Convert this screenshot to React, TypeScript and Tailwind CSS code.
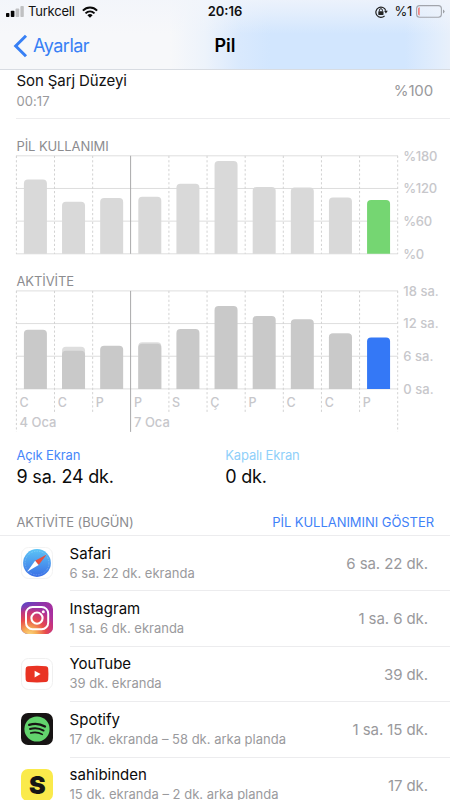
import React from "react";

const STEP = 38.13;
const LEFT = 0.4;

type Bar = { top: number; inner?: number };

function Chart({
  bars,
  top,
  height,
  accent,
  fill,
  labels,
  days,
}: {
  bars: Bar[];
  top: number;
  height: number;
  accent: string;
  fill: string;
  labels: string[];
  days?: string[];
}) {
  const base = top + 98;
  const bar = (x: number, y: number) =>
    `M${x} ${base}V${y + 4}Q${x} ${y} ${x + 4} ${y}H${x + 19}Q${x + 23} ${y} ${x + 23} ${y + 4}V${base}Z`;
  return (
    <svg
      width="434"
      height={height}
      viewBox={`0 0 434 ${height}`}
      className="block overflow-visible font-[Inter,sans-serif]"
    >
      {labels.map((l, i) => (
        <g key={l}>
          <line x1="0" x2="382" y1={top + i * 32.67} y2={top + i * 32.67} stroke="#dedede" strokeWidth="1" />
          <text x="387.2" y={top + i * 32.67 + 4.9} fontSize="13" fontWeight="500" fill="#c7c7cb" letterSpacing={days ? "0.05" : "-0.25"}>
            {l}
          </text>
        </g>
      ))}
      {Array.from({ length: 11 }, (_, i) => {
        const x = LEFT + i * STEP;
        const end = days ? (i % 10 === 0 ? top + 141 : top + 123) : base;
        return i === 3 ? null : (
          <line key={i} x1={x} x2={x} y1={top} y2={end} stroke="#d2d2d2" strokeWidth="1" strokeDasharray="2.2 2.2" />
        );
      })}
      {bars.map((b, i) => {
        const x = LEFT + 7.5 + i * STEP;
        const last = i === bars.length - 1;
        return (
          <g key={i}>
            {b.inner !== undefined && <path d={bar(x, b.top)} fill="#dedede" />}
            <path d={bar(x, b.inner ?? b.top)} fill={last ? accent : fill} />
          </g>
        );
      })}
      <line x1="114.6" x2="114.6" y1={top} y2={days ? top + 141 : base} stroke="#a9a9ab" strokeWidth="1" />
      {days?.map((d, i) => (
        <text key={i} x={LEFT + i * STEP + 3.2} y={top + 116.3} fontSize="12.5" fontWeight="500" fill="#c7c7cb">
          {d}
        </text>
      ))}
      {days && (
        <>
          <text x="3.5" y={top + 136.3} fontSize="13" fontWeight="500" fill="#c7c7cb">4 Oca</text>
          <text x="118" y={top + 136.3} fontSize="13" fontWeight="500" fill="#c7c7cb">7 Oca</text>
        </>
      )}
    </svg>
  );
}

const usage: Bar[] = [179.5, 201.7, 198, 196.8, 183.7, 161, 187, 187.5, 197.5, 200].map((v) => ({ top: v - 155 }));
const activity: Bar[] = [
  { top: 39.8 },
  { top: 56.8, inner: 60.8 },
  { top: 55.8 },
  { top: 52.3, inner: 53.8 },
  { top: 39 },
  { top: 16 },
  { top: 26 },
  { top: 29.2 },
  { top: 43.2, inner: 43.6 },
  { top: 47.6 },
];

function SafariIcon() {
  return (
    <svg width="32" height="32" viewBox="0 0 32 32">
      <defs>
        <linearGradient id="safari" x1="0" y1="0" x2="0" y2="1">
          <stop offset="0" stopColor="#5bc4f6" />
          <stop offset="1" stopColor="#3b6fe6" />
        </linearGradient>
      </defs>
      <rect x=".5" y=".5" width="31" height="31" rx="7" fill="#fff" stroke="#f3f3f3" />
      <circle cx="16" cy="16" r="13.9" fill="url(#safari)" />
      <circle cx="16" cy="16" r="11.9" fill="none" stroke="#fff" strokeOpacity=".35" strokeWidth="1" strokeDasharray=".6 1.1" />
      <path d="M25.7 7.5L14.1 13.8L17.6 18Z" fill="#e8503f" />
      <path d="M14.1 13.8L17.6 18L6.2 24.7Z" fill="#fff" />
    </svg>
  );
}

function InstagramIcon() {
  return (
    <svg width="32" height="32" viewBox="0 0 32 32">
      <defs>
        <linearGradient id="igBase" x1="0" y1="0" x2="1" y2=".3">
          <stop offset="0" stopColor="#5449c6" />
          <stop offset=".55" stopColor="#8b35ad" />
          <stop offset="1" stopColor="#a92f9d" />
        </linearGradient>
        <radialGradient id="igWarm" cx=".27" cy="1.05" r="1.02">
          <stop offset="0" stopColor="#fbdc85" />
          <stop offset=".22" stopColor="#f6ad55" />
          <stop offset=".5" stopColor="#e84b4c" />
          <stop offset=".75" stopColor="#cc3478" stopOpacity=".85" />
          <stop offset="1" stopColor="#9b36b7" stopOpacity="0" />
        </radialGradient>
      </defs>
      <rect width="32" height="32" rx="7" fill="url(#igBase)" />
      <rect width="32" height="32" rx="7" fill="url(#igWarm)" />
      <rect x="5" y="5" width="22.2" height="22.2" rx="6.5" fill="none" stroke="#fff" strokeWidth="2" />
      <circle cx="16" cy="16.1" r="5.6" fill="none" stroke="#fff" strokeWidth="2.1" />
      <circle cx="22.3" cy="9.8" r="1.5" fill="#fff" />
    </svg>
  );
}

function YouTubeIcon() {
  return (
    <svg width="32" height="32" viewBox="0 0 32 32">
      <rect x=".5" y=".5" width="31" height="31" rx="7" fill="#fff" stroke="#f0f0f0" />
      <path d="M4.7 10.5Q4.9 8.5 6.8 8.2Q16 7.5 25.2 8.2Q27.1 8.5 27.2 10.5Q27.7 16 27.2 21.8Q27.1 23.8 25.2 24.1Q16 24.7 6.8 24.1Q4.9 23.8 4.7 21.8Q4.2 16 4.7 10.5Z" fill="#e93323" />
      <path d="M13.6 12.7V19.4L19.6 16Z" fill="#fff" />
    </svg>
  );
}

function SpotifyIcon() {
  return (
    <svg width="32" height="32" viewBox="0 0 32 32">
      <rect width="32" height="32" rx="7" fill="#171414" />
      <circle cx="16" cy="16" r="12.6" fill="#62d36d" />
      <g fill="none" stroke="#171414" strokeLinecap="round">
        <path d="M8.2 11.8C13.4 10.2 19.4 10.8 24 13.5" strokeWidth="2.3" />
        <path d="M9 16C13.4 14.7 18.7 15.3 22.6 17.6" strokeWidth="1.9" />
        <path d="M9.7 20C13.5 19 17.8 19.4 21.3 21.4" strokeWidth="1.6" />
      </g>
    </svg>
  );
}

function SahibindenIcon() {
  return (
    <div className="flex h-8 w-8 items-center justify-center rounded-[7px] bg-[#faea4b] text-[25px] leading-8 font-black text-[#161616]">
      <span>S</span>
    </div>
  );
}

const apps = [
  { name: "Safari", detail: "6 sa. 22 dk. ekranda", time: "6 sa. 22 dk.", icon: <SafariIcon /> },
  { name: "Instagram", detail: "1 sa. 6 dk. ekranda", time: "1 sa. 6 dk.", icon: <InstagramIcon /> },
  { name: "YouTube", detail: "39 dk. ekranda", time: "39 dk.", icon: <YouTubeIcon /> },
  { name: "Spotify", detail: "17 dk. ekranda – 58 dk. arka planda", time: "1 sa. 15 dk.", icon: <SpotifyIcon /> },
  { name: "sahibinden", detail: "15 dk. ekranda – 2 dk. arka planda", time: "17 dk.", icon: <SahibindenIcon /> },
];

function StatusBar() {
  return (
    <div className="grid h-[23px] grid-cols-3 items-center text-[13px] leading-[23px] text-[#111]">
      <div className="flex items-center pl-[6px]">
        <svg width="18" height="11" viewBox="0 0 18 11">
          <rect x="0" y="7" width="3.4" height="4" rx=".8" fill="#050505" />
          <rect x="4.8" y="4.8" width="3.6" height="6.2" rx=".8" fill="#050505" />
          <rect x="9.6" y="2.4" width="3.6" height="8.6" rx=".8" fill="#bfc0c2" />
          <rect x="14.4" y="0" width="3.4" height="11" rx=".8" fill="#bfc0c2" />
        </svg>
        <span className="ml-[4px] tracking-[-0.2px]">Turkcell</span>
        <svg className="ml-[7px]" width="16" height="12" viewBox="0 0 16 12">
          <g fill="none" stroke="#080808" strokeWidth="2">
            <path d="M.9 4.6C5 .5 11 .5 15.1 4.6" />
            <path d="M3.5 7.4C6.2 4.8 9.8 4.8 12.5 7.4" />
          </g>
          <path d="M5.4 9.2Q8 7 10.6 9.2L8 11.8Z" fill="#080808" />
        </svg>
      </div>
      <span className="text-center font-semibold">20:16</span>
      <div className="flex items-center justify-end pr-[5px]">
        <svg width="13" height="12" viewBox="0 0 13 12">
          <path d="M10.8 4.6A5.1 5.1 0 1 0 9.6 9.8" fill="none" stroke="#222" strokeWidth="1.2" />
          <path d="M9 4.8H12.8L10.9 7.4Z" fill="#222" />
          <rect x="3.3" y="5.2" width="5.2" height="3.7" rx=".4" fill="#222" />
          <path d="M4.4 5.3V4.2A1.5 1.5 0 0 1 7.4 4.2V5.3" fill="none" stroke="#222" strokeWidth="1" />
        </svg>
        <span className="ml-[7px] tracking-[-0.3px]">%1</span>
        <svg className="ml-[4px]" width="29" height="13" viewBox="0 0 29 13">
          <rect x=".6" y=".6" width="24.8" height="11.6" rx="3" fill="none" stroke="#a2a5ac" strokeWidth="1.1" />
          <path d="M3.6 2.2V10.6Q2.2 10.4 2.2 9V3.8Q2.2 2.4 3.6 2.2Z" fill="#f26a63" />
          <path d="M27 4.4Q28.6 5.2 28.6 6.4T27 8.4Z" fill="#9da0a6" />
        </svg>
      </div>
    </div>
  );
}

export default function App() {
  return (
    <div className="h-[800px] w-[450px] overflow-hidden bg-white font-[Inter,sans-serif]">
      <header className="h-[70px] border-b border-[#d8dce2] bg-[#f7f8fa] bg-[linear-gradient(to_bottom,#f2f5fbcc_0px,#f2f5fb80_14px,#f2f5fb00_34px),linear-gradient(to_right,#f7f8fa_170px,#edf3fb_205px,#d9e9fd_240px,#d2e6fe_270px,#d2e6fe_405px,#e3eefc_440px,#e8f0fb_450px)]">
        <StatusBar />
        <div className="grid h-[46px] grid-cols-3 items-center">
          <div className="flex items-center pl-[13px] text-[#3880f5]">
            <svg width="15" height="24" viewBox="0 0 15 24">
              <path d="M13 1.7L2.7 12L13 22.3" fill="none" stroke="currentColor" strokeWidth="3" />
            </svg>
            <span className="ml-[5px] text-[18px] leading-6 tracking-[-0.5px]">Ayarlar</span>
          </div>
          <span className="text-center text-[18px] leading-6 font-semibold text-black">Pil</span>
        </div>
      </header>

      <section className="ml-4 flex h-[49px] items-start justify-between border-b border-[#ececee] pr-[17px]">
        <div className="pl-[0.5px]">
          <div className="text-[15px] leading-[22px] tracking-[-0.1px] text-[#111]">Son Şarj Düzeyi</div>
          <div className="text-[13px] leading-[19px] tracking-[0.05px] text-[#99999c]">00:17</div>
        </div>
        <span className="pt-[10px] text-[15px] leading-[22px] tracking-[-0.15px] text-[#99999c]">%100</span>
      </section>

      <section className="h-[136px] pt-[20px] pl-4">
        <h2 className="-mt-px mb-px h-4 pl-[0.5px] text-[13px] leading-4 tracking-[-0.1px] text-[#8c8c8f]">PİL KULLANIMI</h2>
        <Chart bars={usage} top={0.8} height={108} accent="#75d672" fill="#d9d9d9" labels={["%180", "%120", "%60", "%0"]} />
      </section>

      <section className="h-[190px] pt-[19px] pl-4">
        <h2 className="-mt-px mb-px h-4 pl-[0.5px] text-[13px] leading-4 tracking-[-0.1px] text-[#8c8c8f]">AKTİVİTE</h2>
        <Chart
          bars={activity}
          top={0.9}
          height={150}
          accent="#3478f6"
          fill="#c9c9c9"
          labels={["18 sa.", "12 sa.", "6 sa.", "0 sa."]}
          days={["C", "C", "P", "P", "S", "Ç", "P", "C", "C", "P"]}
        />
      </section>

      <section className="grid h-[64px] grid-cols-2 pt-px pr-4 pl-[16.5px]">
        <div>
          <div className="text-[13px] leading-[18px] tracking-[-0.15px] text-[#4787fa]">Açık Ekran</div>
          <div className="pt-px text-[18px] leading-6 tracking-[-0.2px] text-[#0b0b0b]">9 sa. 24 dk.</div>
        </div>
        <div>
          <div className="text-[13px] leading-[18px] tracking-[-0.15px] text-[#8fd0fa]">Kapalı Ekran</div>
          <div className="pt-px text-[18px] leading-6 tracking-[-0.2px] text-[#0b0b0b]">0 dk.</div>
        </div>
      </section>

      <div className="flex h-[27px] items-center justify-between border-b border-[#ececee] pt-px pr-[16px] pl-[16.5px] text-[13px] tracking-[-0.1px]">
        <h2 className="text-[#8c8c8f]">AKTİVİTE (BUGÜN)</h2>
        <button className="tracking-[-0.05px] text-[#3f82f8]">PİL KULLANIMINI GÖSTER</button>
      </div>

      <ul>
        {apps.map((a) => (
          <li key={a.name} className="flex h-[55.4px] items-center pl-[21.4px]">
            <div className="mb-[1.4px] h-8 w-8 shrink-0">{a.icon}</div>
            <div className="ml-[16.2px] flex h-full grow items-center justify-between border-b border-[#ececee] pr-[22px]">
              <div>
                <div className="text-[15px] leading-[20px] text-[#0b0b0b]">{a.name}</div>
                <div className="text-[13px] leading-[19px] text-[#9a9a9d]">{a.detail}</div>
              </div>
              <span className="pt-[2px] text-[15px] tracking-[-0.08px] text-[#99999c]">{a.time}</span>
            </div>
          </li>
        ))}
      </ul>
    </div>
  );
}
